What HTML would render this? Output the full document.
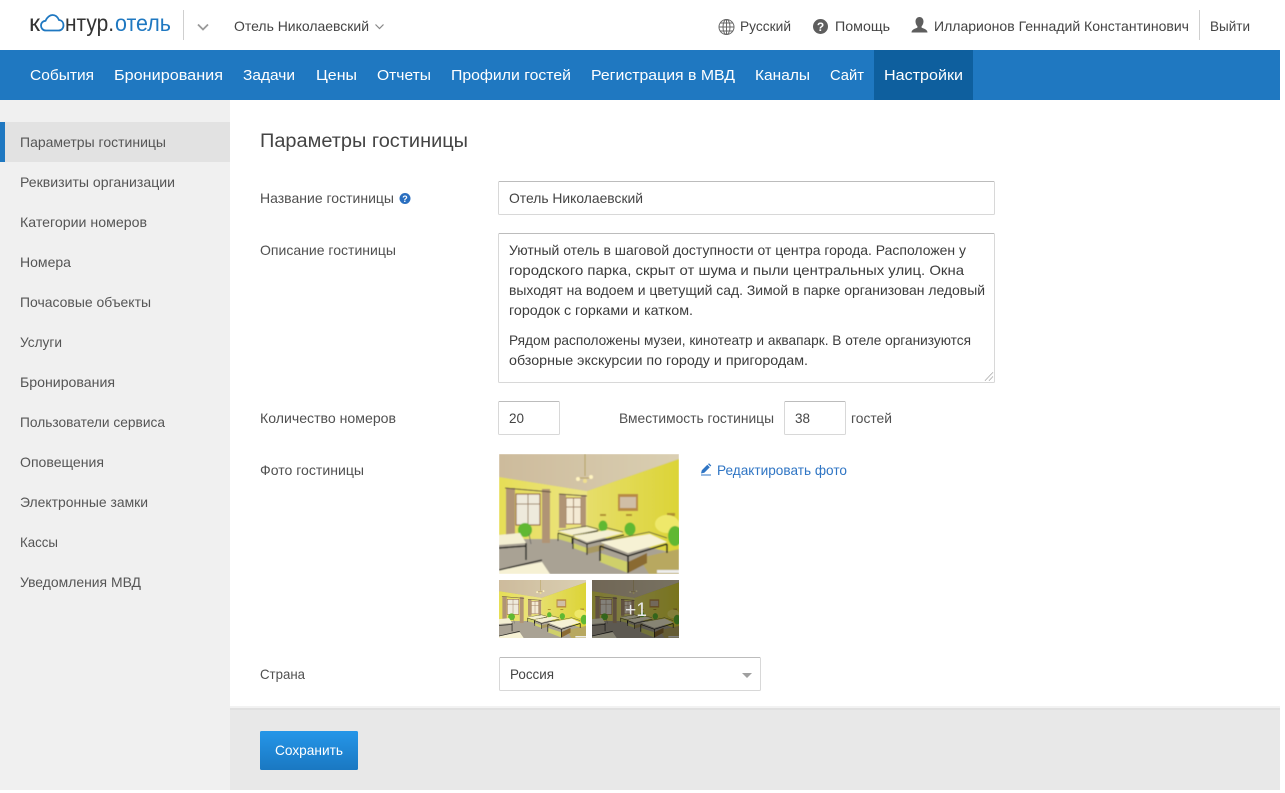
<!DOCTYPE html>
<html lang="ru"><head><meta charset="utf-8"><title>Параметры гостиницы</title>
<style>
html,body{margin:0;padding:0;background:#fff;width:1285px;height:793px;overflow:hidden}
svg{display:block;position:absolute;left:0;top:0}
text{font-family:"Liberation Sans","DejaVu Sans",sans-serif;font-size:14px;fill:#444}
.nav text{font-size:15px;fill:#fff}
.side text{fill:#555}
.lb text{fill:#505050}
.ta text{fill:#3c3c3c}
</style></head><body>
<svg width="1285" height="793" viewBox="0 0 1285 793" xmlns="http://www.w3.org/2000/svg">
<defs>
<linearGradient id="btn" x1="0" y1="0" x2="0" y2="1"><stop offset="0" stop-color="#2596e8"/><stop offset="1" stop-color="#1a78c2"/></linearGradient>
<linearGradient id="rw" x1="0" y1="0" x2="1" y2="0"><stop offset="0" stop-color="#e6de6a"/><stop offset="1" stop-color="#dcd436"/></linearGradient>
<linearGradient id="lw" x1="0" y1="0" x2="1" y2="0"><stop offset="0" stop-color="#e6de56"/><stop offset="1" stop-color="#ece484"/></linearGradient>
<linearGradient id="cl" x1="0" y1="0" x2="1" y2="0"><stop offset="0" stop-color="#cdbb9c"/><stop offset="1" stop-color="#dacfb2"/></linearGradient>
<filter id="soft" x="0" y="0" width="100%" height="100%"><feGaussianBlur stdDeviation="0.55"/></filter>
<g id="room"><g filter="url(#soft)">
<rect width="180" height="120" fill="#a9a294"/>
<polygon points="0,0 180,0 180,5 88,37 0,23" fill="url(#cl)"/>
<polygon points="0,23 88,37 88,85 0,85" fill="url(#lw)"/>
<polygon points="88,37 180,5 180,100 88,80" fill="url(#rw)"/>
<polygon points="0,85 60,85 180,112 180,120 0,120" fill="#a9a294"/>
<polygon points="140,104 180,95 180,120 150,120" fill="#b8a860"/>
<rect x="17" y="40" width="24" height="31" fill="#eeeadc"/><path d="M29 40V71M17 50H41" stroke="#a08468" stroke-width="1" fill="none"/><rect x="17" y="40" width="24" height="31" fill="none" stroke="#9a6c4c" stroke-width="1.2"/>
<rect x="67" y="44" width="15" height="26" fill="#f4ead4"/><path d="M74.5 44V70M67 53H82" stroke="#a08468" stroke-width="1"/><rect x="67" y="44" width="15" height="26" fill="none" stroke="#9a6c4c" stroke-width="1"/>
<rect x="7" y="34" width="9" height="54" fill="#b09474"/><rect x="43" y="35" width="8" height="54" fill="#b09474"/>
<rect x="60" y="40" width="7" height="34" fill="#b09474"/><rect x="82" y="41" width="5" height="32" fill="#b09474"/>
<path d="M6 34L52 38M60 40L88 42" stroke="#5a4a3c" stroke-width="1"/>
<rect x="119" y="40" width="20" height="17" fill="#b88a44"/><rect x="121" y="43" width="16" height="11" fill="#d0bea6"/>
<path d="M86 0V22M79 24H92" stroke="#b09848" stroke-width=".8"/><circle cx="79" cy="25" r="2" fill="#fff4c0"/><circle cx="92" cy="23" r="2" fill="#fff4c0"/><circle cx="86" cy="27" r="2" fill="#f0e090"/>
<g fill="#b09030"><rect x="101" y="60" width="6" height="2"/><rect x="127" y="60" width="6" height="2"/><rect x="168" y="59" width="8" height="3"/></g>
<ellipse cx="168" cy="70" rx="12" ry="9" fill="#eee86a"/>
<path d="M59 77L88 72L99 75M74 81L109 74L124 78M101 88L150 78L168 84" stroke="#44443a" stroke-width=".8" fill="none"/>
<ellipse cx="104" cy="72" rx="4.5" ry="5.5" fill="#60b830"/><ellipse cx="131" cy="75" rx="5.5" ry="6.5" fill="#60b830"/><ellipse cx="176" cy="82" rx="7" ry="10" fill="#60b830"/><ellipse cx="26" cy="76" rx="7" ry="7" fill="#60b830"/><path d="M30 80L32 90" stroke="#666" stroke-width=".8"/>
<polygon points="59,79 73,82 73,89 59,85" fill="#cfd06a"/><polygon points="59,77 88,73 99,76 73,81" fill="#f4efd2"/><path d="M59 79L73 83L99 77M59 79V87M73 83V90" stroke="#22221e" stroke-width="1" fill="none"/>
<polygon points="74,89 88,94 88,99 74,94" fill="#cfd06a"/><polygon points="88,94 105,90 105,96 88,100" fill="#a89860"/><polygon points="74,82 109,76 124,79 88,88" fill="#f4efd2"/><path d="M74 84L88 90L125 81M74 84V95M88 90V101" stroke="#22221e" stroke-width="1.2" fill="none"/>
<polygon points="101,99 129,108 129,119 101,108" fill="#cfd06a"/><polygon points="129,108 148,99 148,109 129,119" fill="#8a6a30"/><polygon points="101,88 151,80 168,88 129,99" fill="#f6f1d4"/><path d="M101 92L129 102L168 90M101 92V107M129 102V119M168 90V99" stroke="#1e1e1a" stroke-width="1.5" fill="none"/>
<polygon points="0,81 21,79 27,89 0,91" fill="#f4efd2"/><path d="M0 94L27 92M27 89V106" stroke="#22221e" stroke-width="1.4" fill="none"/>
<polygon points="0,116 43,108 51,120 0,120" fill="#f6f1d4"/><path d="M0 116L43 106" stroke="#22221e" stroke-width="1.4"/>
<rect x="158" y="116" width="22" height="3" fill="#eeeeee"/>
</g></g>
</defs>

<rect x="0" y="50" width="1280" height="50" fill="#1f78c1"/>
<rect x="874" y="50" width="99" height="50" fill="#0e5f9e"/>
<rect x="0" y="100" width="230" height="690" fill="#f0f0f0"/>
<rect x="5" y="122" width="225" height="40" fill="#e2e2e2"/>
<rect x="0" y="122" width="5" height="40" fill="#1f78c1"/>
<rect x="230" y="706" width="1050" height="4" fill="#f2f2f2"/>
<rect x="230" y="709" width="1050" height="81" fill="#e8e8e8"/>
<rect x="230" y="708" width="1050" height="2" fill="#e0e0e0"/>

<!-- logo -->
<text x="29" y="31" textLength="11" lengthAdjust="spacingAndGlyphs" style="font-size:23px;fill:#333">к</text>
<path d="M46 30.5C42.5 30.5 41 27.8 41 25.5C41 23 42.8 21 45.5 20.8C47 17.2 50 15 52.5 15C55.5 15 57.8 17.2 59 20C61.8 20.3 63.5 22.5 63.5 25.3C63.5 28.2 61.6 30.5 58.5 30.5Z" fill="none" stroke="#1f78c1" stroke-width="1.8"/>
<text x="65" y="31" textLength="49" lengthAdjust="spacingAndGlyphs" style="font-size:23px;fill:#333">нтур.</text>
<text x="115" y="31" textLength="56" lengthAdjust="spacingAndGlyphs" style="font-size:23px;fill:#1f78c1">отель</text>
<rect x="183" y="10" width="1" height="30" fill="#cfcfcf"/>
<path d="M198 24.5L203 29.5L208 24.5" fill="none" stroke="#999" stroke-width="1.8"/>
<text x="234" y="31" textLength="135" lengthAdjust="spacingAndGlyphs">Отель Николаевский</text>
<path d="M375.5 24.5L379.5 28.5L383.5 24.5" fill="none" stroke="#888" stroke-width="1.2"/>

<!-- top right -->
<g fill="none" stroke="#666" stroke-width="1"><circle cx="726.5" cy="27" r="7.5"/><ellipse cx="726.5" cy="27" rx="3.5" ry="7.5"/><path d="M726.5 19.5V34.5M719 27H734M720.5 23H732.5M720.5 31H732.5"/></g>
<text x="740" y="31" textLength="51" lengthAdjust="spacingAndGlyphs">Русский</text>
<circle cx="820.5" cy="26.5" r="7.5" fill="#5e5e5e"/>
<text x="820.5" y="31" text-anchor="middle" style="font-size:12px;font-weight:bold;fill:#fff">?</text>
<text x="835" y="31" textLength="55" lengthAdjust="spacingAndGlyphs">Помощь</text>
<path d="M919.5 17C922 17 923.5 19 923.5 21.5C923.5 23.5 922.6 25.2 921.6 26.2V27.6C923.6 28.6 927.5 29.4 927.5 32.5H911.5C911.5 29.4 915.4 28.6 917.4 27.6V26.2C916.4 25.2 915.5 23.5 915.5 21.5C915.5 19 917 17 919.5 17Z" fill="#5e5e5e"/>
<text x="934" y="31" textLength="255" lengthAdjust="spacingAndGlyphs">Илларионов Геннадий Константинович</text>
<rect x="1199" y="10" width="1" height="30" fill="#cfcfcf"/>
<text x="1210" y="31" textLength="40" lengthAdjust="spacingAndGlyphs">Выйти</text>

<!-- nav -->
<g class="nav">
<text x="30" y="80" textLength="64" lengthAdjust="spacingAndGlyphs">События</text>
<text x="114" y="80" textLength="109" lengthAdjust="spacingAndGlyphs">Бронирования</text>
<text x="243" y="80" textLength="52" lengthAdjust="spacingAndGlyphs">Задачи</text>
<text x="316" y="80" textLength="41" lengthAdjust="spacingAndGlyphs">Цены</text>
<text x="377" y="80" textLength="54" lengthAdjust="spacingAndGlyphs">Отчеты</text>
<text x="451" y="80" textLength="120" lengthAdjust="spacingAndGlyphs">Профили гостей</text>
<text x="591" y="80" textLength="144" lengthAdjust="spacingAndGlyphs">Регистрация в МВД</text>
<text x="755" y="80" textLength="55" lengthAdjust="spacingAndGlyphs">Каналы</text>
<text x="830" y="80" textLength="34" lengthAdjust="spacingAndGlyphs">Сайт</text>
<text x="884" y="80" textLength="79" lengthAdjust="spacingAndGlyphs">Настройки</text>
</g>

<!-- sidebar -->
<g class="side">
<text x="20" y="147" textLength="146" lengthAdjust="spacingAndGlyphs">Параметры гостиницы</text>
<text x="20" y="187" textLength="155" lengthAdjust="spacingAndGlyphs">Реквизиты организации</text>
<text x="20" y="227" textLength="127" lengthAdjust="spacingAndGlyphs">Категории номеров</text>
<text x="20" y="267" textLength="51" lengthAdjust="spacingAndGlyphs">Номера</text>
<text x="20" y="307" textLength="131" lengthAdjust="spacingAndGlyphs">Почасовые объекты</text>
<text x="20" y="347" textLength="42" lengthAdjust="spacingAndGlyphs">Услуги</text>
<text x="20" y="387" textLength="95" lengthAdjust="spacingAndGlyphs">Бронирования</text>
<text x="20" y="427" textLength="145" lengthAdjust="spacingAndGlyphs">Пользователи сервиса</text>
<text x="20" y="467" textLength="84" lengthAdjust="spacingAndGlyphs">Оповещения</text>
<text x="20" y="507" textLength="128" lengthAdjust="spacingAndGlyphs">Электронные замки</text>
<text x="20" y="547" textLength="38" lengthAdjust="spacingAndGlyphs">Кассы</text>
<text x="20" y="587" textLength="121" lengthAdjust="spacingAndGlyphs">Уведомления МВД</text>
</g>

<!-- main -->
<text x="260" y="147" textLength="208" lengthAdjust="spacingAndGlyphs" style="font-size:19px;fill:#444">Параметры гостиницы</text>
<g class="lb">
<text x="260" y="203" textLength="134" lengthAdjust="spacingAndGlyphs">Название гостиницы</text>
<text x="260" y="255" textLength="136" lengthAdjust="spacingAndGlyphs">Описание гостиницы</text>
<text x="260" y="423" textLength="136" lengthAdjust="spacingAndGlyphs">Количество номеров</text>
<text x="619" y="423" textLength="155" lengthAdjust="spacingAndGlyphs">Вместимость гостиницы</text>
<text x="851" y="423" textLength="41" lengthAdjust="spacingAndGlyphs">гостей</text>
<text x="260" y="475" textLength="104" lengthAdjust="spacingAndGlyphs">Фото гостиницы</text>
<text x="260" y="679" textLength="45" lengthAdjust="spacingAndGlyphs">Страна</text>
</g>
<circle cx="405" cy="198.5" r="5.5" fill="#2a6fc0"/>
<text x="405" y="202" text-anchor="middle" style="font-size:9px;font-weight:bold;fill:#fff">?</text>

<g fill="#fff" stroke="#d8d8d8">
<rect x="498.5" y="181.5" width="496" height="33" rx="1"/>
<rect x="498.5" y="233.5" width="496" height="149" rx="1"/>
<rect x="498.5" y="401.5" width="61" height="33" rx="1"/>
<rect x="784.5" y="401.5" width="61" height="33" rx="1"/>
<rect x="499.5" y="657.5" width="261" height="33" rx="1"/>
</g>
<g stroke="#bcbcbc"><path d="M499 181.5H994M499 233.5H994M499 401.5H559M785 401.5H845M500 657.5H760"/></g>
<text x="509" y="203" textLength="134" lengthAdjust="spacingAndGlyphs">Отель Николаевский</text>
<g class="ta">
<text x="509" y="255" textLength="457" lengthAdjust="spacingAndGlyphs">Уютный отель в шаговой доступности от центра города. Расположен у</text>
<text x="509" y="275" textLength="455" lengthAdjust="spacingAndGlyphs">городского парка, скрыт от шума и пыли центральных улиц. Окна</text>
<text x="509" y="295" textLength="476" lengthAdjust="spacingAndGlyphs">выходят на водоем и цветущий сад. Зимой в парке организован ледовый</text>
<text x="509" y="315" textLength="184" lengthAdjust="spacingAndGlyphs">городок с горками и катком.</text>
<text x="509" y="345" textLength="462" lengthAdjust="spacingAndGlyphs">Рядом расположены музеи, кинотеатр и аквапарк. В отеле организуются</text>
<text x="509" y="365" textLength="299" lengthAdjust="spacingAndGlyphs">обзорные экскурсии по городу и пригородам.</text>
</g>
<path d="M985 380.5L993 372.5M989 380.5L993 376.5" stroke="#999" stroke-width="1" stroke-dasharray="1 .5"/>
<text x="509" y="423" textLength="15" lengthAdjust="spacingAndGlyphs">20</text>
<text x="795" y="423" textLength="15" lengthAdjust="spacingAndGlyphs">38</text>
<text x="510" y="679" textLength="44" lengthAdjust="spacingAndGlyphs">Россия</text>
<path d="M742 673H752L747 678Z" fill="#a0a0a0"/>

<!-- photos -->
<svg x="499" y="454" width="180" height="120" viewBox="0 0 180 120"><use href="#room"/></svg>
<svg x="499" y="580" width="87" height="58" viewBox="0 0 180 120"><use href="#room"/></svg>
<svg x="592" y="580" width="87" height="58" viewBox="0 0 180 120"><use href="#room"/><rect width="180" height="120" fill="#000" opacity=".45"/></svg>
<text x="625" y="616" textLength="22" lengthAdjust="spacingAndGlyphs" style="font-size:19px;fill:#e8e8e8">+1</text>
<path d="M701 473.5L701.8 470.3L707.3 464.8L709.8 467.3L704.3 472.8ZM708 464.1L709 463.2L711.3 465.5L710.4 466.5ZM704.5 474.5H711V475.5H701V474.5Z" fill="#2f75c4"/>
<text x="717" y="475" textLength="130" lengthAdjust="spacingAndGlyphs" style="fill:#2f75c4">Редактировать фото</text>

<!-- footer -->
<rect x="260" y="731" width="98" height="39" rx="1.5" fill="url(#btn)"/>
<text x="275" y="755" textLength="68" lengthAdjust="spacingAndGlyphs" style="fill:#fff">Сохранить</text>
</svg>
</body></html>
